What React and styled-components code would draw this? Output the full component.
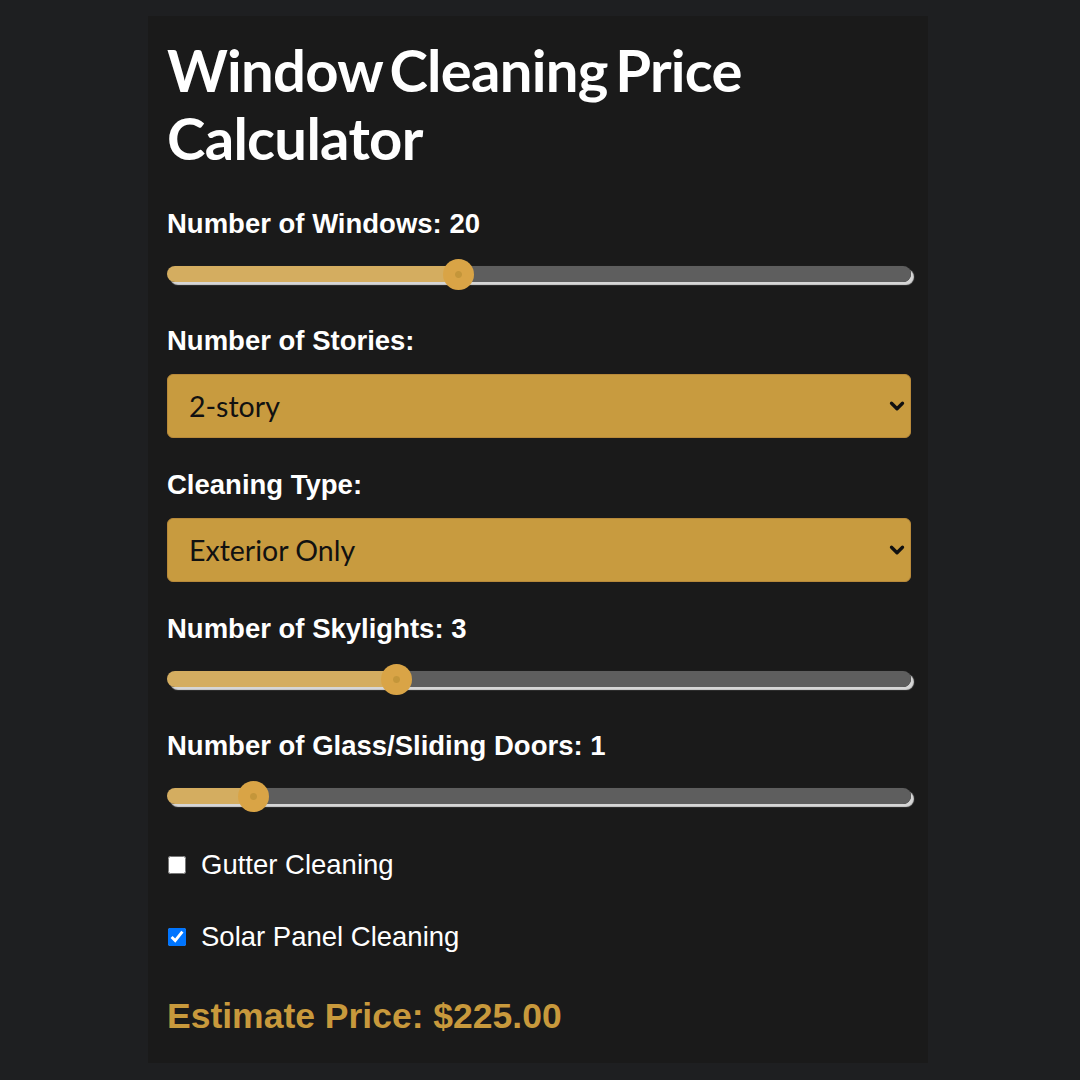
import React, { useState } from "react";
import styled, { createGlobalStyle } from "styled-components";
import { ChevronDown } from "lucide-react";

const GlobalStyle = createGlobalStyle`
  body {
    margin: 0;
    background: #1e1f21;
    font-family: "Liberation Sans", Arial, sans-serif;
  }
`;

const App = () => {
  const [windows, setWindows] = useState(20);
  const [stories, setStories] = useState("2");
  const [type, setType] = useState("exterior");
  const [skylights, setSkylights] = useState(3);
  const [doors, setDoors] = useState(1);
  const [gutter, setGutter] = useState(false);
  const [solar, setSolar] = useState(true);

  return (
    <Page>
      <GlobalStyle />
      <Calculator>
        <Title>Window Cleaning Price Calculator</Title>

        <Field>
          <Label>Number of Windows: {windows}</Label>
          <Slider value={windows} min={1} max={50} onChange={setWindows} />
        </Field>

        <Field>
          <Label>Number of Stories:</Label>
          <Dropdown value={stories} onChange={setStories}>
            <option value="1">1-story</option>
            <option value="2">2-story</option>
            <option value="3">3-story</option>
          </Dropdown>
        </Field>

        <Field>
          <Label>Cleaning Type:</Label>
          <Dropdown value={type} onChange={setType}>
            <option value="exterior">Exterior Only</option>
            <option value="interior">Interior Only</option>
            <option value="both">Interior &amp; Exterior</option>
          </Dropdown>
        </Field>

        <Field>
          <Label>Number of Skylights: {skylights}</Label>
          <Slider value={skylights} min={0} max={10} onChange={setSkylights} />
        </Field>

        <Field>
          <Label>Number of Glass/Sliding Doors: {doors}</Label>
          <Slider value={doors} min={0} max={10} onChange={setDoors} />
        </Field>

        <CheckRow>
          <Checkbox
            type="checkbox"
            checked={gutter}
            onChange={e => setGutter(e.target.checked)}
          />
          Gutter Cleaning
        </CheckRow>

        <CheckRow>
          <Checkbox
            type="checkbox"
            checked={solar}
            onChange={e => setSolar(e.target.checked)}
          />
          Solar Panel Cleaning
        </CheckRow>

        <Estimate>Estimate Price: $225.00</Estimate>
      </Calculator>
    </Page>
  );
};

const Slider = ({ value, min, max, onChange }) => {
  // fill runs up to the thumb centre (thumb is 31px wide)
  const p = (value - min) / (max - min);
  const stop = `calc(15.5px + (100% - 31px) * ${p})`;
  return (
    <Range
      type="range"
      min={min}
      max={max}
      value={value}
      onChange={e => onChange(Number(e.target.value))}
      style={{
        background: `linear-gradient(to right, #d4ad60 ${stop}, #5e5e5e ${stop})`
      }}
    />
  );
};

const Dropdown = ({ value, onChange, children }) => (
  <SelectBox>
    <Select value={value} onChange={e => onChange(e.target.value)}>
      {children}
    </Select>
    <Arrow>
      <ChevronDown size={22} strokeWidth={3.6} />
    </Arrow>
  </SelectBox>
);

export default App;

const Page = styled.div`
  display: flex;
  justify-content: center;
  padding: 16px 0 18px;
`;

const Calculator = styled.div`
  width: 780px;
  box-sizing: border-box;
  margin-left: -4px;
  padding: 20px 17px 27px 19px;
  background: #1a1a1a;
  display: flex;
  flex-direction: column;
`;

const Title = styled.h1`
  margin: 0 0 36px;
  font-family: Lato, "Liberation Sans", sans-serif;
  font-weight: 700;
  font-size: 58px;
  line-height: 68px;
  letter-spacing: -0.7px;
  word-spacing: -6px;
  color: #fff;
  max-width: 640px;
`;

const Field = styled.div`
  display: flex;
  flex-direction: column;
  gap: 17px;
  margin-bottom: 31px;
`;

const Label = styled.label`
  font-family: "Liberation Sans", Arial, sans-serif;
  font-weight: 700;
  font-size: 27.5px;
  line-height: 32px;
  color: #fff;
`;

const Range = styled.input`
  -webkit-appearance: none;
  appearance: none;
  width: 744px;
  height: 16px;
  margin: 9px 0 12px;
  border-radius: 8px;
  outline: none;
  box-shadow: 3px 3px 1px #d6d6d6, 0 0 1px #333;

  &::-webkit-slider-thumb {
    -webkit-appearance: none;
    width: 31px;
    height: 31px;
    border-radius: 50%;
    background: radial-gradient(circle, #c4963a 0 3px, #d9a446 4px);
    cursor: pointer;
  }
`;

const SelectBox = styled.div`
  position: relative;
  width: 744px;
`;

const Select = styled.select`
  -webkit-appearance: none;
  appearance: none;
  width: 100%;
  height: 64px;
  padding: 0 40px 0 21px;
  border: 1px solid #b8893a;
  border-radius: 6px;
  background-color: #c89b3f;
  color: #111;
  font-family: Lato, "Liberation Sans", sans-serif;
  font-size: 28.5px;
  outline: none;
`;

const Arrow = styled.span`
  position: absolute;
  right: 3px;
  top: 50%;
  transform: translateY(-50%);
  display: flex;
  color: #111;
  pointer-events: none;
`;

const CheckRow = styled.label`
  display: flex;
  align-items: center;
  gap: 15px;
  height: 32px;
  margin: 2px 0 38px;
  font-family: "Liberation Sans", Arial, sans-serif;
  font-size: 27.5px;
  line-height: 32px;
  color: #fff;
`;

const Checkbox = styled.input`
  width: 18px;
  height: 18px;
  margin: 0 0 0 1px;
`;

const Estimate = styled.h2`
  margin: 5px 0 0;
  font-family: "Liberation Sans", Arial, sans-serif;
  font-weight: 700;
  font-size: 35.5px;
  line-height: 40px;
  color: #c8993c;
`;
